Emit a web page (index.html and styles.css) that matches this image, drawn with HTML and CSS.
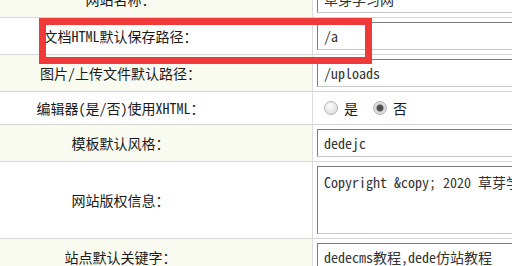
FILE: index.html
```html
<!DOCTYPE html>
<html lang="zh-CN">
  <head>
    <meta charset="UTF-8" />
    <meta name="viewport" content="width=device-width, initial-scale=1.0" />
    <title>系统基本参数</title>
    <link rel="stylesheet" href="styles.css">
  </head>
  <body>
    <table class="cfg">
      <tr class="alt">
        <td class="lbl">网站名称：</td>
        <td class="val"><input type="text" class="txt" value="草芽学习网" /></td>
      </tr>
      <tr>
        <td class="lbl">文档HTML默认保存路径：</td>
        <td class="val"><input type="text" class="txt" value="/a" /></td>
      </tr>
      <tr class="alt">
        <td class="lbl">图片/上传文件默认路径：</td>
        <td class="val"><input type="text" class="txt" value="/uploads" /></td>
      </tr>
      <tr class="short">
        <td class="lbl">编辑器(是/否)使用XHTML：</td>
        <td class="val">
          <div class="opts">
            <label class="opt"><input type="radio" name="xhtml" value="Y" />是</label>
            <label class="opt"><input type="radio" name="xhtml" value="N" checked />否</label>
          </div>
        </td>
      </tr>
      <tr class="alt">
        <td class="lbl">模板默认风格：</td>
        <td class="val"><input type="text" class="txt" value="dedejc" /></td>
      </tr>
      <tr>
        <td class="lbl">网站版权信息：</td>
        <td class="val"><textarea class="area">Copyright &amp;copy; 2020 草芽学习网</textarea></td>
      </tr>
      <tr class="alt">
        <td class="lbl">站点默认关键字：</td>
        <td class="val"><input type="text" class="txt" value="dedecms教程,dede仿站教程" /></td>
      </tr>
    </table>

    <div class="mark"></div>
  </body>
</html>
```

FILE: styles.css
```css
body {
  margin: 0;
  background: #fff;
  font-family: "Noto Sans Mono CJK SC", "Noto Sans CJK SC", "Liberation Mono", monospace;
  font-size: 14px;
  color: #1a1a1a;
  overflow: hidden;
}
.cfg {
  border-collapse: collapse;
  margin-top: -19px;
  margin-left: -71px;
  width: 700px;
}
.cfg td {
  border-bottom: 1px solid #d6d6d6;
  padding: 4px 4px;
  height: 28px;
  vertical-align: middle;
}
.cfg .short td {
  height: 24px;
}
.lbl {
  width: 375px;
  text-align: center;
  border-right: 1px solid #dcdcdc;
  background: #fff;
}
.alt .lbl {
  background: #f9fbf0;
}
.val {
  background: #fff;
}
.txt,
.area {
  display: block;
  box-sizing: border-box;
  width: 300px;
  height: 28px;
  margin: 0;
  padding: 0 6px;
  font-family: inherit;
  font-size: 14px;
  color: #333;
  border: 1px solid;
  border-color: #7c7c7c #c8c8c8 #c8c8c8 #7c7c7c;
  background: #fff;
}
.area {
  height: 68px;
  padding: 5px 6px;
  resize: none;
  overflow: hidden;
}
.opts {
  display: flex;
  align-items: center;
  gap: 15px;
  padding-left: 7px;
}
.opt {
  display: flex;
  align-items: center;
}
.opt input {
  appearance: none;
  width: 14px;
  height: 14px;
  margin: 0 6px 0 0;
  border-radius: 50%;
  border: 1px solid #b4b4b4;
  background: radial-gradient(circle at 40% 35%, #fdfdfd 0, #e4e4e4 60%, #cfcfcf 100%);
}
.opt input:checked {
  background: radial-gradient(circle, #444 0, #555 3px, #d8d8d8 4px, #e8e8e8 100%);
}
.mark {
  position: absolute;
  left: 39px;
  top: 18px;
  width: 333px;
  height: 46px;
  box-sizing: border-box;
  border: 7px solid #f03a3a;
}
```
